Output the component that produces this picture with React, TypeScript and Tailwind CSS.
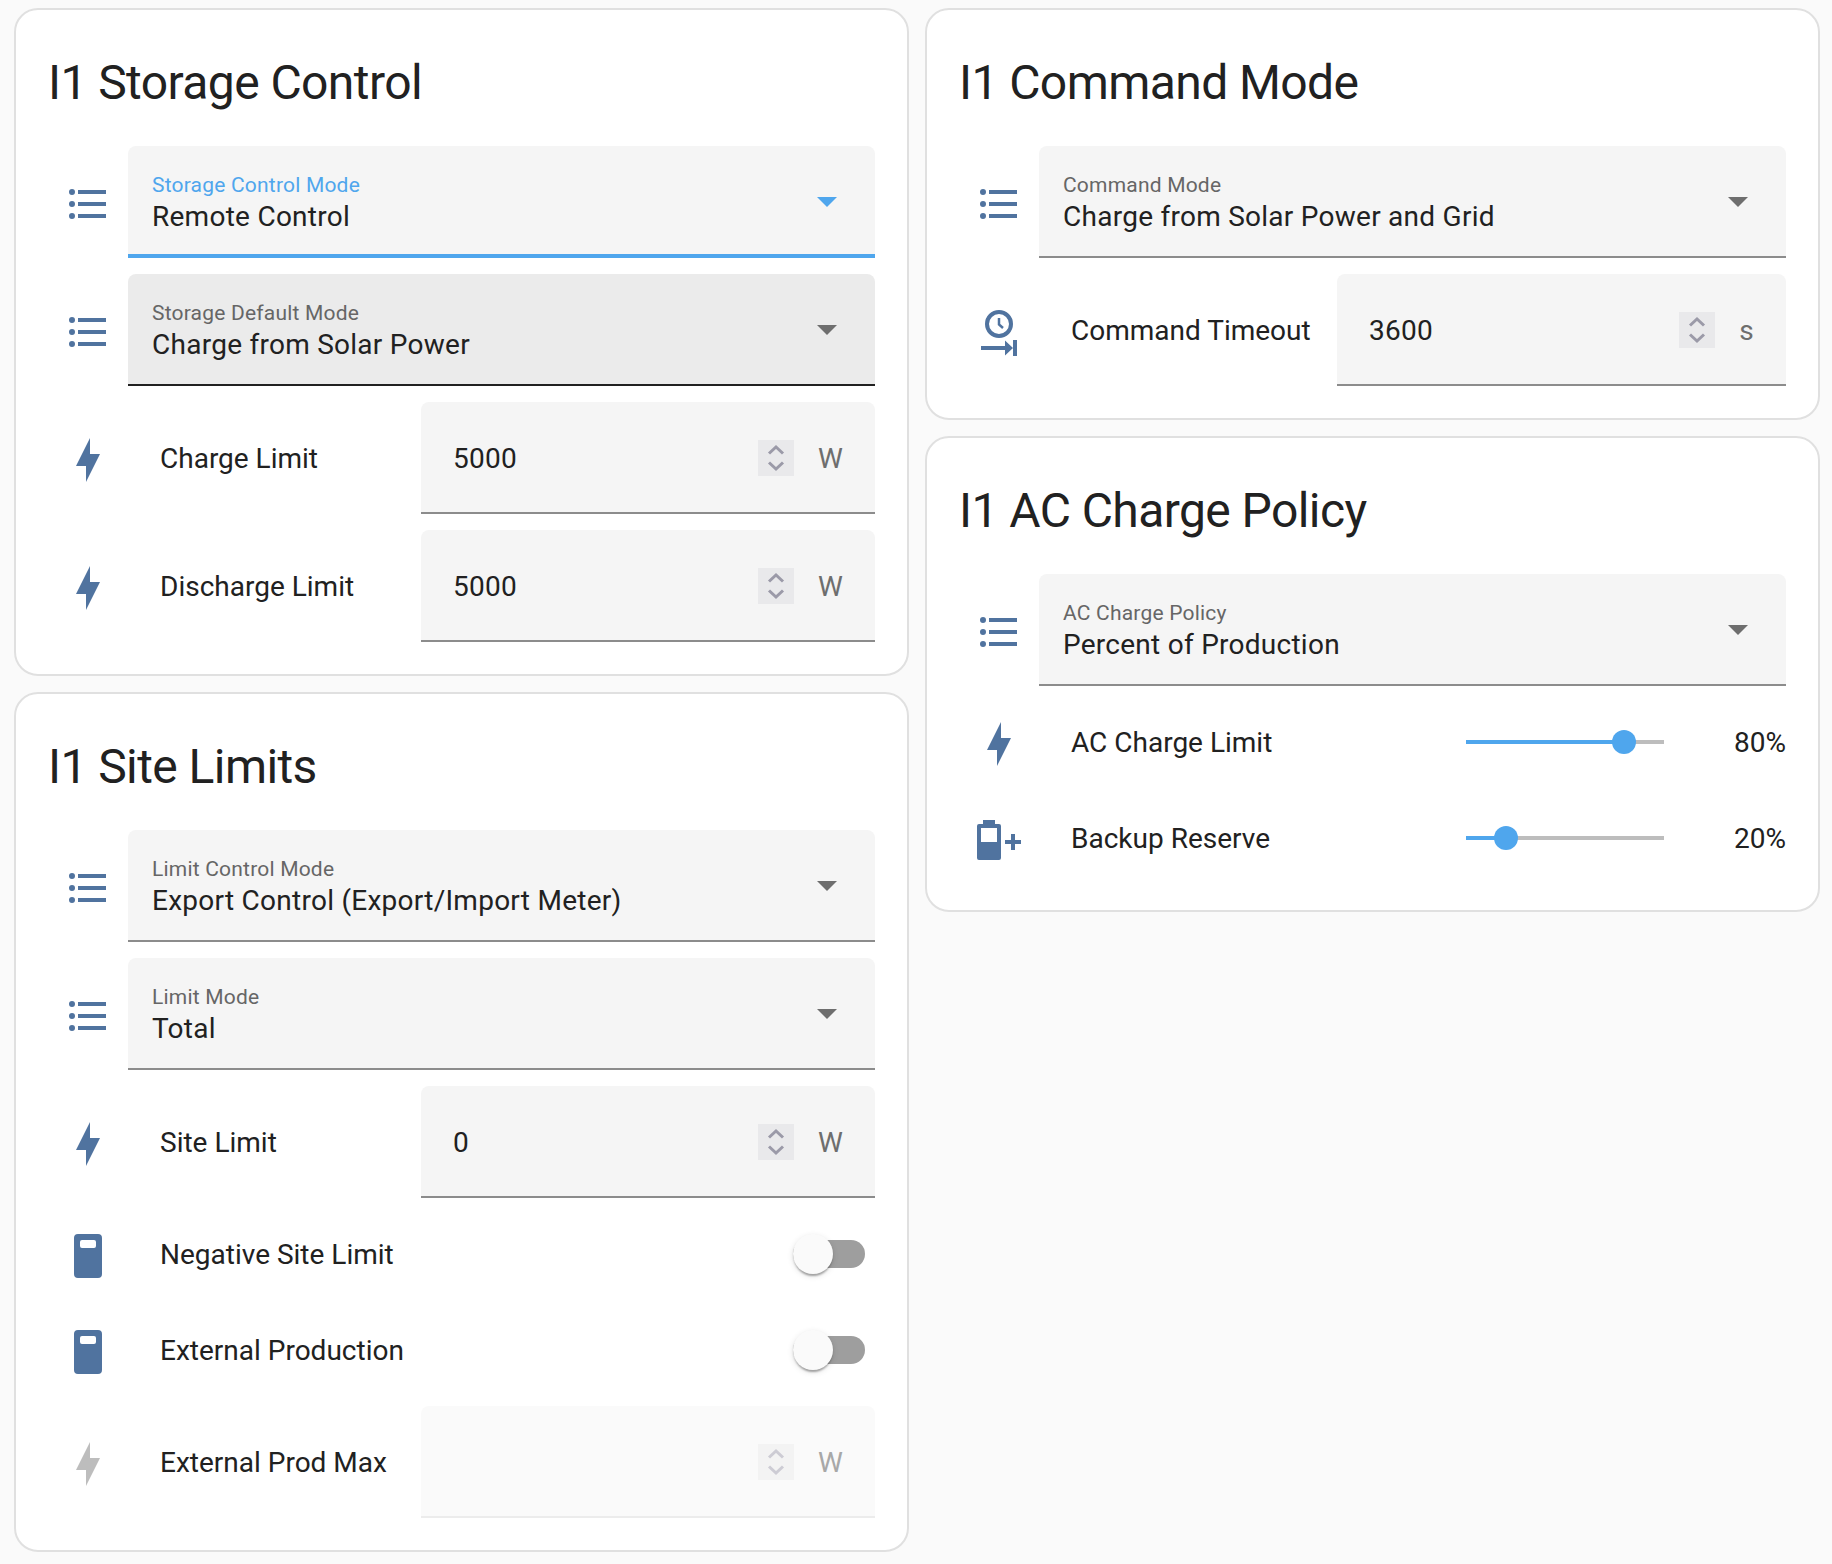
import React from 'react';

const ICON = '#50739f';

function ListIcon() {
    return (
        <svg viewBox="0 0 24 24" className="w-12 h-12" fill={ICON}>
            <path d="M7,5H21V7H7V5M7,13V11H21V13H7M4,4.5A1.5,1.5 0 0,1 5.5,6A1.5,1.5 0 0,1 4,7.5A1.5,1.5 0 0,1 2.5,6A1.5,1.5 0 0,1 4,4.5M4,10.5A1.5,1.5 0 0,1 5.5,12A1.5,1.5 0 0,1 4,13.5A1.5,1.5 0 0,1 2.5,12A1.5,1.5 0 0,1 4,10.5M7,19V17H21V19H7M4,16.5A1.5,1.5 0 0,1 5.5,18A1.5,1.5 0 0,1 4,19.5A1.5,1.5 0 0,1 2.5,18A1.5,1.5 0 0,1 4,16.5Z" />
        </svg>
    );
}

function BoltIcon({ disabled }: { disabled?: boolean }) {
    return (
        <svg viewBox="0 0 24 24" className="w-12 h-12" fill={disabled ? '#bdbdbd' : ICON}>
            <path d="M11 15H6L13 1V9H18L11 23V15Z" />
        </svg>
    );
}

function MeterIcon() {
    return (
        <svg viewBox="0 0 48 48" className="w-12 h-12" fill={ICON}>
            <path fillRule="evenodd" d="M14 2H34A4 4 0 0 1 38 6V42A4 4 0 0 1 34 46H14A4 4 0 0 1 10 42V6A4 4 0 0 1 14 2ZM18 8A2 2 0 0 0 16 10V14A2 2 0 0 0 18 16H30A2 2 0 0 0 32 14V10A2 2 0 0 0 30 8Z" />
        </svg>
    );
}

function TimerIcon() {
    return (
        <svg viewBox="0 0 48 48" className="w-12 h-12">
            <circle cx="24" cy="16" r="12" fill="none" stroke={ICON} strokeWidth="4" />
            <path d="M24 10V16.5L28 20" fill="none" stroke={ICON} strokeWidth="2.5" />
            <path d="M6 38H30V32.5L38 40L30 47.5V42H6ZM38 32H42V48H38Z" fill={ICON} />
        </svg>
    );
}

function BatteryIcon() {
    return (
        <svg viewBox="0 0 48 48" className="w-12 h-12" fill={ICON}>
            <path fillRule="evenodd" d="M8 4H20V8H24A2 2 0 0 1 26 10V42A2 2 0 0 1 24 44H4A2 2 0 0 1 2 42V10A2 2 0 0 1 4 8H8ZM6 12V26H22V12Z" />
            <path d="M36 18H40V24H46V28H40V34H36V28H30V24H36Z" />
        </svg>
    );
}

function Badge({ children }: { children: React.ReactNode }) {
    return <div className="w-20 shrink-0 mt-1 flex justify-center">{children}</div>;
}

function SelectRow({ label, value, focused, hovered }: { label: string; value: string; focused?: boolean; hovered?: boolean }) {
    return (
        <div className="flex items-center">
            <Badge><ListIcon /></Badge>
            <div
                className={`flex-1 h-[112px] rounded-t-lg flex items-center pl-6 pr-[38px] ${hovered ? 'bg-[#ebebeb]' : 'bg-[#f5f5f5]'} ${
                    focused ? 'border-b-4 border-[#4fa6ed] pt-[2px]' : hovered ? 'border-b-2 border-[#212121]' : 'border-b-2 border-[#8c8c8c]'
                }`}
            >
                <div className="flex-1 pt-[7px]">
                    <div className={`text-[21px] leading-[24px] tracking-[0.2px] ${focused ? 'text-[#4fa6ed]' : 'text-[#666666]'}`}>{label}</div>
                    <div className="text-[28px] leading-[39px] tracking-[0.26px] text-[#212121]">{value}</div>
                </div>
                <svg viewBox="0 0 20 10" className={`w-5 h-2.5 mt-[2px] ${focused ? 'fill-[#4fa6ed]' : 'fill-[#6e6e6e]'}`}>
                    <path d="M0 0H20L10 10Z" />
                </svg>
            </div>
        </div>
    );
}

function NumberRow({ icon, label, value, unit, width = 'w-[454px]', disabled }: { icon: React.ReactNode; label: string; value: string; unit: string; width?: string; disabled?: boolean }) {
    return (
        <div className="flex items-center">
            <Badge>{icon}</Badge>
            <div className="flex-1 ml-8 pt-[2px] text-[28px] text-[#212121]">{label}</div>
            <div className={`${width} h-[112px] rounded-t-lg flex items-center pl-8 pr-8 pt-[2px] border-b-2 ${disabled ? 'bg-[#fafafa] border-[#ececec]' : 'bg-[#f5f5f5] border-[#8c8c8c]'}`}>
                <div className="flex-1 pt-[2px] text-[28px] tracking-[0.26px] text-[#212121]">{value}</div>
                <div className={`w-9 h-9 flex items-center justify-center ${disabled ? 'bg-[#f3f3f3]' : 'bg-[#e9e9eb]'}`}>
                    <svg viewBox="0 0 36 36" className="w-9 h-9" fill="none" stroke={disabled ? '#cdccd4' : '#9b9aa8'} strokeWidth="3">
                        <path d="M11 13.5L18 7L25 13.5" />
                        <path d="M11 22.5L18 29L25 22.5" />
                    </svg>
                </div>
                <div className={`ml-6 pt-[2px] text-[28px] tracking-[0.26px] ${disabled ? 'text-[#a8a8a8]' : 'text-[#6e6e6e]'}`}>{unit}</div>
            </div>
        </div>
    );
}

function SwitchRow({ label }: { label: string }) {
    return (
        <div className="flex items-center h-20">
            <Badge><MeterIcon /></Badge>
            <div className="flex-1 ml-8 pt-[2px] text-[28px] text-[#212121]">{label}</div>
            <div className="relative w-[72px] h-7 mr-[10px] rounded-full bg-[#9e9e9e]">
                <div className="absolute -top-1.5 left-0 w-10 h-10 rounded-full bg-[#fafafa] shadow-[0_4px_2px_-2px_rgba(0,0,0,0.2),0_2px_2px_rgba(0,0,0,0.14),0_2px_6px_rgba(0,0,0,0.12)]" />
            </div>
        </div>
    );
}

function SliderRow({ icon, label, percent, thumb }: { icon: React.ReactNode; label: string; percent: string; thumb: number }) {
    return (
        <div className="flex items-center h-20">
            <Badge>{icon}</Badge>
            <div className="flex-1 ml-8 pt-[2px] text-[28px] text-[#212121]">{label}</div>
            <div className="relative w-[198px] h-1 bg-[#bdbdbd]">
                <div className="absolute left-0 top-0 h-1 bg-[#4fa6ed]" style={{ width: thumb }} />
                <div className="absolute -top-2.5 w-6 h-6 rounded-full bg-[#4fa6ed]" style={{ left: thumb - 12 }} />
            </div>
            <div className="w-[122px] pt-[2px] text-right text-[28px] text-[#212121]">{percent}</div>
        </div>
    );
}

function Card({ title, children }: { title: string; children: React.ReactNode }) {
    return (
        <div className="bg-white border-2 border-[#e0e0e0] rounded-3xl px-8 pb-8">
            <h1 className="h-[136px] pt-[41px] text-[48px] leading-[64px] tracking-[-0.58px] text-[#212121]">{title}</h1>
            <div className="flex flex-col gap-4">{children}</div>
        </div>
    );
}

export default function App() {
    return (
        <div className="min-h-screen bg-[#fafafa] pl-[14px] pt-2 flex items-start gap-4 font-['Roboto',sans-serif]">
            <div className="w-[895px] flex flex-col gap-4">
                <Card title="I1 Storage Control">
                    <SelectRow label="Storage Control Mode" value="Remote Control" focused />
                    <SelectRow label="Storage Default Mode" value="Charge from Solar Power" hovered />
                    <NumberRow icon={<BoltIcon />} label="Charge Limit" value="5000" unit="W" />
                    <NumberRow icon={<BoltIcon />} label="Discharge Limit" value="5000" unit="W" />
                </Card>
                <Card title="I1 Site Limits">
                    <SelectRow label="Limit Control Mode" value="Export Control (Export/Import Meter)" />
                    <SelectRow label="Limit Mode" value="Total" />
                    <NumberRow icon={<BoltIcon />} label="Site Limit" value="0" unit="W" />
                    <SwitchRow label="Negative Site Limit" />
                    <SwitchRow label="External Production" />
                    <NumberRow icon={<BoltIcon disabled />} label="External Prod Max" value="" unit="W" disabled />
                </Card>
            </div>
            <div className="w-[895px] flex flex-col gap-4">
                <Card title="I1 Command Mode">
                    <SelectRow label="Command Mode" value="Charge from Solar Power and Grid" />
                    <NumberRow icon={<TimerIcon />} label="Command Timeout" value="3600" unit="s" width="w-[449px]" />
                </Card>
                <Card title="I1 AC Charge Policy">
                    <SelectRow label="AC Charge Policy" value="Percent of Production" />
                    <SliderRow icon={<BoltIcon />} label="AC Charge Limit" percent="80%" thumb={158} />
                    <SliderRow icon={<BatteryIcon />} label="Backup Reserve" percent="20%" thumb={40} />
                </Card>
            </div>
        </div>
    );
}
